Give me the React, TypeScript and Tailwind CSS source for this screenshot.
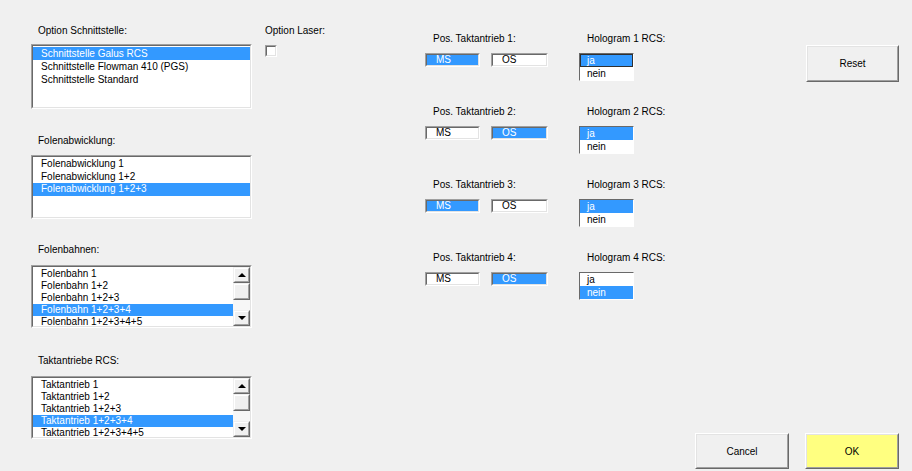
import React from 'react';

const font = { fontFamily: '"Liberation Sans", Arial, sans-serif' };

interface ListBoxProps {
  items: string[];
  selected: number;
  rowHeight: number;
  height: number;
  scroll?: boolean;
}

const Triangle: React.FC<{ up?: boolean }> = ({ up }) => (
  <span
    className={
      up
        ? 'block w-0 h-0 border-x-[4px] border-x-transparent border-b-[4px] border-b-black'
        : 'block w-0 h-0 border-x-[4px] border-x-transparent border-t-[4px] border-t-black'
    }
  />
);

const Raised: React.FC<{ className?: string; children?: React.ReactNode }> = ({ className = '', children }) => (
  <div className={`border border-t-[#f0f0f0] border-l-[#f0f0f0] border-r-[#696969] border-b-[#696969] ${className}`}>
    <div className="w-full h-full border border-t-white border-l-white border-r-[#a0a0a0] border-b-[#a0a0a0] bg-[#f0f0f0] flex items-center justify-center">
      {children}
    </div>
  </div>
);

const Sunken: React.FC<{ className?: string; children?: React.ReactNode }> = ({ className = '', children }) => (
  <div className={`border border-t-[#a0a0a0] border-l-[#a0a0a0] border-r-white border-b-white ${className}`}>
    <div className="w-full h-full border border-t-[#696969] border-l-[#696969] border-r-[#e3e3e3] border-b-[#e3e3e3] overflow-hidden">
      {children}
    </div>
  </div>
);

const ListBox: React.FC<ListBoxProps> = ({ items, selected, rowHeight, height, scroll }) => (
  <Sunken className="w-[221px]">
    <div className="flex bg-white" style={{ height: height - 4 }}>
      <div className="flex-1 overflow-hidden pt-[1px]">
        {items.map((item, i) => (
          <div
            key={item}
            className={`pl-[8px] text-[10px] whitespace-nowrap ${i === selected ? 'bg-[#3399ff] text-white' : 'text-black'}`}
            style={{ height: rowHeight, lineHeight: `${rowHeight}px` }}
          >
            {item}
          </div>
        ))}
      </div>
      {scroll && (
        <div className="w-[17px] flex flex-col bg-[#f7f7f7]">
          <Raised className="h-[16px]">
            <Triangle up />
          </Raised>
          <Raised className="h-[17px]" />
          <div className="flex-1" />
          <Raised className="h-[16px]">
            <Triangle />
          </Raised>
        </div>
      )}
    </div>
  </Sunken>
);

const Toggle: React.FC<{ label: string; active: boolean; width: string }> = ({ label, active, width }) => (
  <Sunken className={`${width} h-[14px]`}>
    <div className={`h-full pl-[9px] text-[10px] leading-[10px] flex items-center ${active ? 'bg-[#3399ff] text-white' : 'bg-white text-black'}`}>
      {label}
    </div>
  </Sunken>
);

const Hologram: React.FC<{ selected: number; focus?: boolean }> = ({ selected, focus }) => (
  <div className="w-[55px] h-[28px] border border-t-[#696969] border-l-[#696969] border-r-white border-b-white bg-white">
    {['ja', 'nein'].map((t, i) => (
      <div
        key={t}
        className={`h-[13px] leading-[13px] pl-[7px] text-[10px] ${i === selected ? 'bg-[#3399ff] text-white' : 'text-black'} ${
          i === selected && focus ? 'outline outline-1 -outline-offset-1 outline-[#303030]' : ''
        }`}
      >
        {t}
      </div>
    ))}
  </div>
);

const Button: React.FC<{ label: string; yellow?: boolean; className?: string }> = ({ label, yellow, className = '' }) => (
  <button
    className={`border border-t-white border-l-white border-r-[#696969] border-b-[#696969] ${className}`}
  >
    <div
      className={`w-full h-full border border-t-[#e3e3e3] border-l-[#e3e3e3] border-r-[#a0a0a0] border-b-[#a0a0a0] flex items-center justify-center text-[10px] text-black ${
        yellow ? 'bg-[#ffff80]' : 'bg-[#f0f0f0]'
      }`}
    >
      {label}
    </div>
  </button>
);

const Label: React.FC<{ children: React.ReactNode; className?: string }> = ({ children, className = '' }) => (
  <div className={`text-[10px] leading-[13px] h-[13px] text-black whitespace-nowrap ${className}`}>{children}</div>
);

const positions = [
  { ms: true, hologram: 0, focus: true },
  { ms: false, hologram: 0 },
  { ms: true, hologram: 0 },
  { ms: false, hologram: 1 },
];

export default function App() {
  return (
    <div className="w-[912px] h-[471px] bg-[#f0f0f0] flex overflow-hidden" style={font}>
      {/* left column: list boxes */}
      <div className="ml-[31px] w-[221px] pt-[24px] flex flex-col">
        <Label className="pl-[7px]">Option Schnittstelle:</Label>
        <div className="mt-[7px]">
          <ListBox
            items={['Schnittstelle Galus RCS', 'Schnittstelle Flowman 410 (PGS)', 'Schnittstelle Standard']}
            selected={0}
            rowHeight={13}
            height={65}
          />
        </div>

        <Label className="pl-[7px] mt-[25px]">Folenabwicklung:</Label>
        <div className="mt-[8px]">
          <ListBox
            items={['Folenabwicklung 1', 'Folenabwicklung 1+2', 'Folenabwicklung 1+2+3']}
            selected={2}
            rowHeight={12.5}
            height={64}
          />
        </div>

        <Label className="pl-[7px] mt-[24px]">Folenbahnen:</Label>
        <div className="mt-[9px]">
          <ListBox
            items={['Folenbahn 1', 'Folenbahn 1+2', 'Folenbahn 1+2+3', 'Folenbahn 1+2+3+4', 'Folenbahn 1+2+3+4+5']}
            selected={3}
            rowHeight={12}
            height={63}
            scroll
          />
        </div>

        <Label className="pl-[7px] mt-[26px]">Taktantriebe RCS:</Label>
        <div className="mt-[9px]">
          <ListBox
            items={['Taktantrieb 1', 'Taktantrieb 1+2', 'Taktantrieb 1+2+3', 'Taktantrieb 1+2+3+4', 'Taktantrieb 1+2+3+4+5']}
            selected={3}
            rowHeight={12}
            height={63}
            scroll
          />
        </div>
      </div>

      {/* laser option */}
      <div className="ml-[13px] w-[160px] pt-[24px] flex flex-col">
        <Label>Option Laser:</Label>
        <div className="mt-[8px] w-[12px] h-[12px] border border-t-[#a0a0a0] border-l-[#a0a0a0] border-r-white border-b-white">
          <div className="w-full h-full bg-white border border-t-[#696969] border-l-[#696969] border-r-[#e3e3e3] border-b-[#e3e3e3]" />
        </div>
      </div>

      {/* position toggles */}
      <div className="w-[154px] pt-[32px] flex flex-col">
        {positions.map((p, i) => (
          <div key={i} className="h-[73px] flex flex-col">
            <Label className="pl-[8px]">Pos. Taktantrieb {i + 1}:</Label>
            <div className="mt-[8px] flex gap-[11px]">
              <Toggle label="MS" active={p.ms} width="w-[55px]" />
              <Toggle label="OS" active={!p.ms} width="w-[57px]" />
            </div>
          </div>
        ))}
      </div>

      {/* hologram lists */}
      <div className="w-[60px] pt-[32px] flex flex-col">
        {positions.map((p, i) => (
          <div key={i} className="h-[73px] flex flex-col">
            <Label className="pl-[8px]">Hologram {i + 1} RCS:</Label>
            <div className="mt-[8px]">
              <Hologram selected={p.hologram} focus={p.focus} />
            </div>
          </div>
        ))}
      </div>

      {/* buttons */}
      <div className="flex-1 flex flex-col items-end justify-between pt-[45px] pb-[2px] pr-[13px]">
        <Button label="Reset" className="w-[93px] h-[37px]" />
        <div className="flex gap-[16px]">
          <Button label="Cancel" className="w-[94px] h-[36px]" />
          <Button label="OK" yellow className="w-[94px] h-[36px]" />
        </div>
      </div>
    </div>
  );
}
